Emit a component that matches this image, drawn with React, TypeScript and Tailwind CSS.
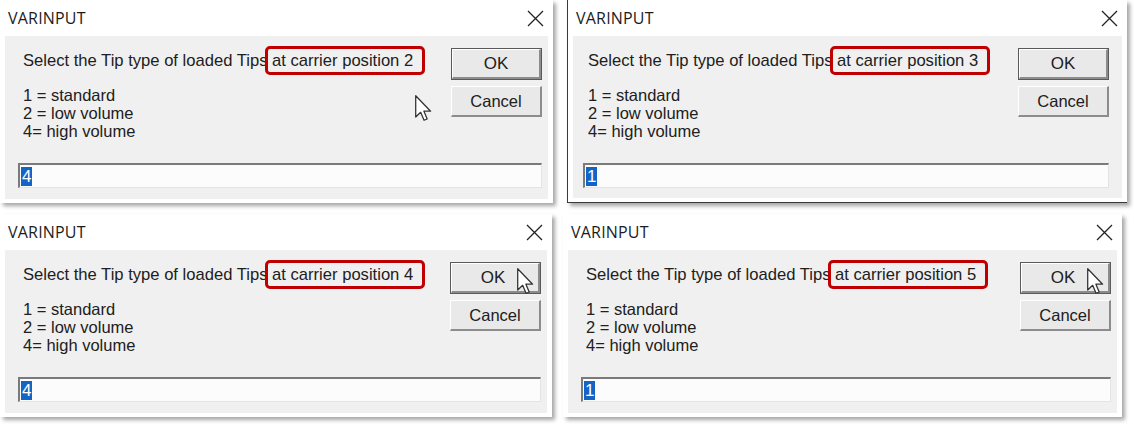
type Props = {
  pos: string;
  value: string;
  cursor?: "body" | "ok";
  width: string;
  frame?: string;
  inner?: string;
};

function Pointer({ className }: { className: string }) {
  return (
    <svg className={className} viewBox="0 0 12 19" width="17" height="27">
      <path
        d="M0.5 0.5 L0.5 15.5 L4 12.2 L6.4 17.8 L8.6 16.9 L6.3 11.4 L11 11.4 Z"
        fill="#fff"
        stroke="#333"
        strokeWidth="0.9"
        strokeLinejoin="round"
      />
    </svg>
  );
}

function Dialog({ pos, value, cursor, width, frame = "", inner = "pl-[13px] pr-[6px]" }: Props) {
  return (
    <div className={`${width} h-[203px] flex flex-col bg-white shadow-[3px_3px_4px_rgba(0,0,0,0.35)] ${frame}`}>
      <div className="h-[36px] flex items-center justify-between pl-[8px] pr-[9px] shrink-0">
        <span className="text-[16px] text-[#1c1c1c] font-['Open_Sans',sans-serif] tracking-[0.2px]">VARINPUT</span>
        <svg width="17" height="17" viewBox="0 0 17 17">
          <path d="M1 1 L16 16 M16 1 L1 16" stroke="#222" strokeWidth="1.3" />
        </svg>
      </div>
      <div className={`relative flex-1 mx-[5px] mb-[4px] bg-[#f0f0f0] pt-[12px] ${inner} font-['Liberation_Sans',Arial,sans-serif] text-[#202020]`}>
        <div className="flex">
          <div className="flex-1 pl-[5px] pt-[3px]">
            <p className="text-[16.6px] leading-[19px] whitespace-nowrap">
              Select the Tip type of loaded Tips{" "}
              <span className="relative">
                at carrier position {pos}
                <span className="absolute -left-[7px] -right-[12px] -top-[5px] -bottom-[5px] border-[3px] border-[#c00000] rounded-[5px]" />
              </span>
            </p>
            <div className="mt-[16px] text-[16.5px] leading-[18px]">
              <p>1 = standard</p>
              <p>2 = low volume</p>
              <p>4= high volume</p>
            </div>
          </div>
          <div className="w-[91px] flex flex-col gap-[6px]">
            <div className="relative h-[32px] border border-[#5a5a5a] bg-[#e9e9e9]">
              <div className="h-full border-t border-l border-white border-b-2 border-r-2 border-b-[#8c8c8c] border-r-[#8c8c8c] flex items-center justify-center text-[17px]">
                <span className={cursor === "ok" ? "-translate-x-[2px]" : ""}>OK</span>
              </div>
              {cursor === "ok" && <Pointer className="absolute left-[66px] top-[5px]" />}
            </div>
            <div className="h-[31px] border-t border-l border-white border-b-2 border-r-2 border-b-[#8c8c8c] border-r-[#8c8c8c] bg-[#e9e9e9] flex items-center justify-center text-[16.5px]">
              Cancel
            </div>
          </div>
        </div>
        <div className="mt-[23px] h-[25px] border-t-2 border-l-2 border-t-[#7a7a7a] border-l-[#7a7a7a] border-b border-r border-b-[#e4e4e4] border-r-[#e4e4e4] bg-[#fcfcfc] flex items-center pl-[1px]">
          <span className="bg-[#1464c8] text-white text-[17px] leading-[19px] px-[1px]">{value}</span>
        </div>
        {cursor === "body" && <Pointer className="absolute left-[410px] top-[59px]" />}
      </div>
    </div>
  );
}

export default function App() {
  return (
    <div className="w-[1134px] h-[428px] bg-white flex flex-col gap-[11px]">
      <div className="flex gap-[14px]">
        <Dialog pos="2" value="4" cursor="body" width="w-[553px]" />
        <Dialog
          pos="3"
          value="1"
          width="w-[560px]"
          frame="border-l border-b border-[#3a3a3a]"
          inner="pl-[10px] pr-[13px]"
        />
      </div>
      <div className="flex gap-[11px]">
        <Dialog pos="4" value="4" cursor="ok" width="w-[552px]" />
        <Dialog pos="5" value="1" cursor="ok" width="w-[559px]" />
      </div>
    </div>
  );
}
